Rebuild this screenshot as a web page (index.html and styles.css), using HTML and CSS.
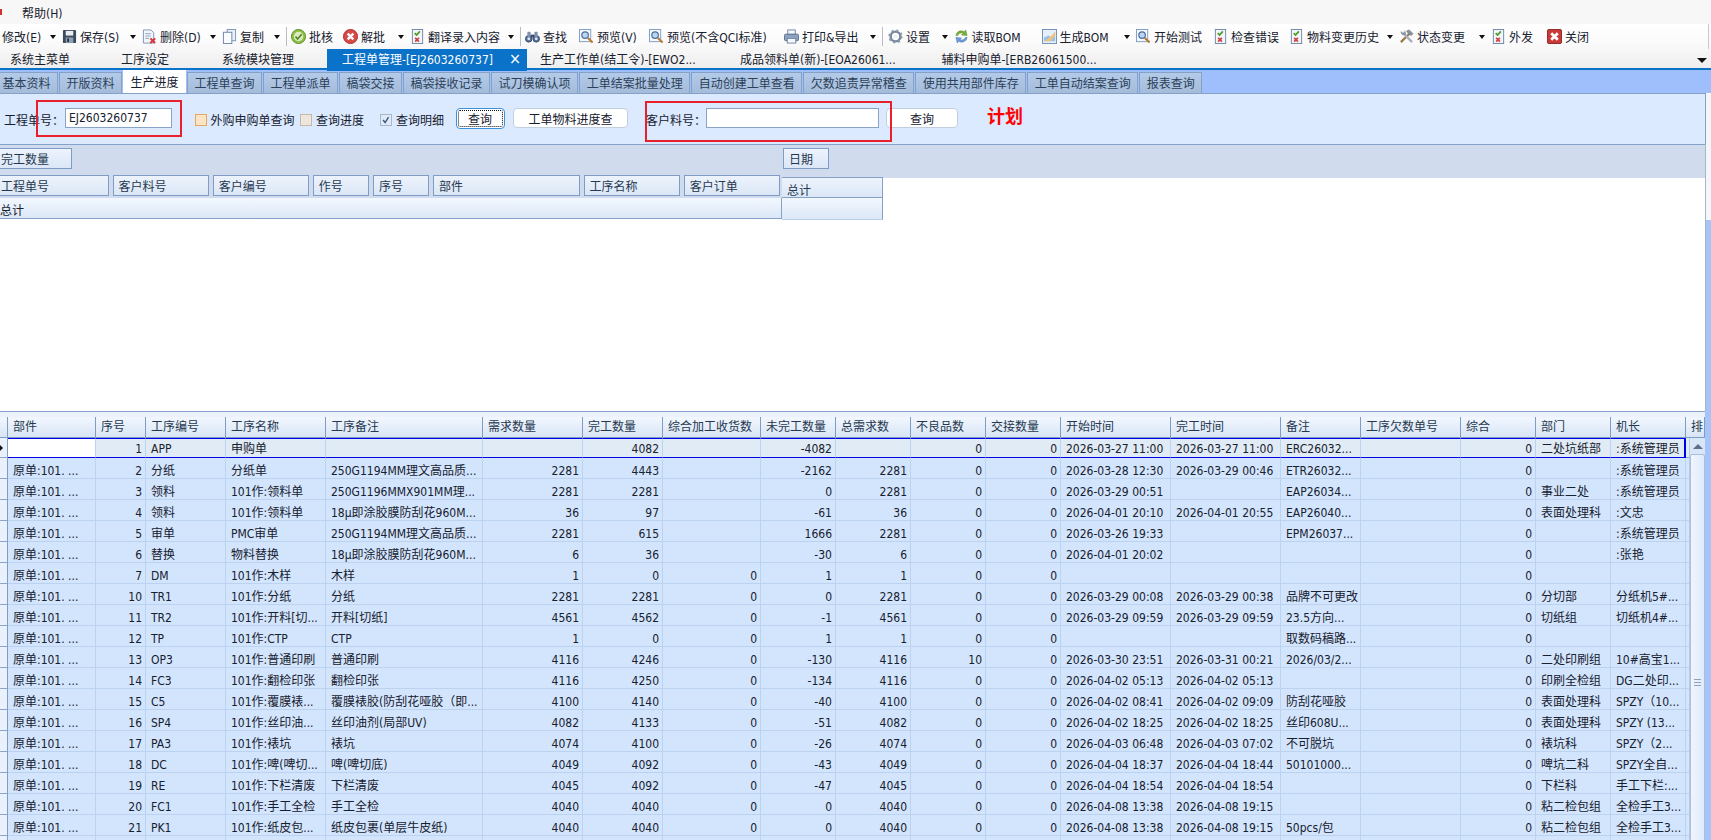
FILE: index.html
```html
<!DOCTYPE html>
<html lang="zh-CN">
<head>
  <meta charset="UTF-8" />
  <title>工程单管理</title>
  <link rel="stylesheet" href="styles.css">
</head>
<body>

<svg class="defs" width="0" height="0">
  <symbol id="i-save" viewBox="0 0 16 16"><rect x="1" y="1" width="14" height="14" rx="1" fill="#3d4a5c"/><rect x="4" y="2" width="8" height="5" fill="#e8edf3"/><rect x="4" y="9" width="8" height="6" fill="#8fa0b4"/><rect x="5.500" y="10" width="2" height="4" fill="#2b3644"/></symbol>
  <symbol id="i-del" viewBox="0 0 16 16"><path d="M1.500 1h8l3 3v11h-11z" fill="#f2f6fb" stroke="#7d94b4"/><path d="M3.500 5h6M3.500 7.500h6M3.500 10h4" stroke="#8aa0bd"/><path d="M9 10l5 5M14 10l-5 5" stroke="#d8363a" stroke-width="2.200"/></symbol>
  <symbol id="i-copy" viewBox="0 0 16 16"><rect x="5.500" y="0.500" width="9" height="12" fill="#eaf0f8" stroke="#7d94b4"/><rect x="1.500" y="3.500" width="9" height="12" fill="#f8fbff" stroke="#6d86a8"/></symbol>
  <symbol id="i-ok" viewBox="0 0 16 16"><circle cx="8" cy="8" r="7.500" fill="#8fbf45" stroke="#5c8a26"/><circle cx="8" cy="8" r="5" fill="#dbe9c4"/><path d="M4.800 8l2.300 2.600 4.300-5" fill="none" stroke="#4f8a1e" stroke-width="1.800"/></symbol>
  <symbol id="i-no" viewBox="0 0 16 16"><circle cx="8" cy="8" r="7.500" fill="#d84a48" stroke="#a92a2a"/><path d="M5 5l6 6M11 5l-6 6" stroke="#fff" stroke-width="2.600"/></symbol>
  <symbol id="i-check" viewBox="0 0 16 16"><rect x="2.500" y="0.500" width="11" height="15" fill="#f2f6fb" stroke="#6d86a8"/><path d="M5 4.500l2 2 3.500-4" fill="none" stroke="#4f9a22" stroke-width="1.800"/><path d="M5.500 9.500l4 4M9.500 9.500l-4 4" stroke="#cf4040" stroke-width="1.800"/></symbol>
  <symbol id="i-find" viewBox="0 0 16 16"><circle cx="4" cy="10.500" r="3.500" fill="#55719a" stroke="#3a4d6a"/><circle cx="12" cy="10.500" r="3.500" fill="#55719a" stroke="#3a4d6a"/><rect x="2.500" y="3" width="3.500" height="6" rx="1" fill="#7d91ad"/><rect x="10" y="3" width="3.500" height="6" rx="1" fill="#7d91ad"/><rect x="6" y="6" width="4" height="3" fill="#3a4d6a"/><circle cx="4" cy="10.500" r="1.500" fill="#dfe8f4"/><circle cx="12" cy="10.500" r="1.500" fill="#dfe8f4"/></symbol>
  <symbol id="i-zoom" viewBox="0 0 16 16"><rect x="0.500" y="0.500" width="12" height="13" fill="#f4f8fd" stroke="#7d9cc4"/><circle cx="6.500" cy="6.500" r="3.500" fill="#bcd6f2" stroke="#4d6f9c" stroke-width="1.300"/><path d="M9.500 9.500l5 5" stroke="#b77a30" stroke-width="2.200"/></symbol>
  <symbol id="i-print" viewBox="0 0 16 16"><rect x="4" y="1" width="8" height="5" fill="#f5f8fc" stroke="#6f86a6"/><rect x="0.500" y="5.500" width="15" height="7" rx="1.500" fill="#8da3c0" stroke="#566d8c"/><rect x="3.500" y="10" width="9" height="5" fill="#f5f8fc" stroke="#6f86a6"/></symbol>
  <symbol id="i-gear" viewBox="0 0 16 16"><circle cx="8" cy="8" r="5.200" fill="none" stroke="#77879b" stroke-width="2.600"/><circle cx="8" cy="8" r="6.400" fill="none" stroke="#8b99ab" stroke-width="2.400" stroke-dasharray="2.200 2.830"/><circle cx="8" cy="8" r="2.200" fill="#eef1f5"/></symbol>
  <symbol id="i-sync" viewBox="0 0 16 16"><path d="M2 7c.500-4 5-6.500 9-4l1.500-2 1.500 6-6-.500 1.800-1.800C7 3.500 4.500 5 4 7z" fill="#79b13c" stroke="#538a20" stroke-width=".5"/><path d="M14 9c-.500 4-5 6.500-9 4l-1.500 2L2 9l6 .500-1.800 1.800C9 12.500 11.500 11 12 9z" fill="#6d9ed8" stroke="#406fa8" stroke-width=".5"/></symbol>
  <symbol id="i-chart" viewBox="0 0 16 16"><rect x="0.500" y="0.500" width="15" height="15" fill="#e6f0fb" stroke="#6f8fb8"/><path d="M2 13V9l5-2 3 2 4-6v10z" fill="#9cc0e6"/><path d="M2 13l5-3 7-7v4l-5 6z" fill="#f1c27a"/></symbol>
  <symbol id="i-tools" viewBox="0 0 16 16"><path d="M2 14L11 5" stroke="#9b7a44" stroke-width="2.400"/><path d="M8 2l3-1 4 4-2 2-3-2z" fill="#8792a2" stroke="#5d6877" stroke-width=".5"/><path d="M14 14L6 6" stroke="#a7b0bc" stroke-width="2.400"/><path d="M6.500 6.500A3.500 3.500 0 0 1 2 2l2 2 1.500-.500L6 2 4 1a3.500 3.500 0 0 1 3 5z" fill="#8792a2"/></symbol>
  <symbol id="i-close" viewBox="0 0 16 16"><rect x="0.500" y="0.500" width="15" height="15" rx="1.500" fill="#c83a36" stroke="#8e2320"/><path d="M4.500 4.500l7 7M11.500 4.500l-7 7" stroke="#fff" stroke-width="3"/></symbol>
</svg>

<div class="menubar"><i class="menu-stub"></i><span class="menu-item">帮助(H)</span></div>

<div class="chrome">
  <div class="toolbar">
    <div class="tool"><span>修改(E)</span><i class="caret"></i></div>
    <div class="tool"><svg><use href="#i-save"/></svg><span>保存(S)</span><i class="caret"></i></div>
    <div class="tool"><svg><use href="#i-del"/></svg><span>删除(D)</span><i class="caret"></i></div>
    <div class="tool"><svg><use href="#i-copy"/></svg><span>复制</span><i class="caret"></i></div>
    <div class="sep"></div>
    <div class="tool"><svg><use href="#i-ok"/></svg><span>批核</span></div>
    <div class="tool"><svg><use href="#i-no"/></svg><span>解批</span><i class="caret"></i></div>
    <div class="tool"><svg><use href="#i-check"/></svg><span>翻译录入内容</span><i class="caret"></i></div>
    <div class="sep"></div>
    <div class="tool"><svg><use href="#i-find"/></svg><span>查找</span></div>
    <div class="tool"><svg><use href="#i-zoom"/></svg><span>预览(V)</span></div>
    <div class="tool"><svg><use href="#i-zoom"/></svg><span>预览(不含QCI标准)</span></div>
    <div class="tool"><svg><use href="#i-print"/></svg><span>打印&amp;导出</span><i class="caret"></i></div>
    <div class="sep"></div>
    <div class="tool"><svg><use href="#i-gear"/></svg><span>设置</span><i class="caret"></i></div>
    <div class="tool"><svg><use href="#i-sync"/></svg><span>读取BOM</span></div>
    <div class="tool"><svg><use href="#i-chart"/></svg><span>生成BOM</span><i class="caret"></i></div>
    <div class="tool"><svg><use href="#i-zoom"/></svg><span>开始测试</span></div>
    <div class="tool"><svg><use href="#i-check"/></svg><span>检查错误</span></div>
    <div class="tool"><svg><use href="#i-check"/></svg><span>物料变更历史</span><i class="caret"></i></div>
    <div class="tool"><svg><use href="#i-tools"/></svg><span>状态变更</span><i class="caret"></i></div>
    <div class="tool"><svg><use href="#i-check"/></svg><span>外发</span></div>
    <div class="tool"><svg><use href="#i-close"/></svg><span>关闭</span></div>
  </div>

  <div class="doc-tabs">
    <div class="doc-tab">系统主菜单</div>
    <div class="doc-tab">工序设定</div>
    <div class="doc-tab">系统模块管理</div>
    <div class="doc-tab doc-active"><span>工程单管理-[EJ2603260737]</span><b class="doc-x">×</b></div>
    <div class="doc-tab">生产工作单(结工令)-[EWO2...</div>
    <div class="doc-tab">成品领料单(新)-[EOA26061...</div>
    <div class="doc-tab">辅料申购单-[ERB26061500...</div>
    <div class="doc-more"><i class="caret"></i></div>
  </div>
</div>

<div class="work">
  <div class="sub-tabs">
    <div class="sub-tab">基本资料</div>
    <div class="sub-tab">开版资料</div>
    <div class="sub-tab sub-active">生产进度</div>
    <div class="sub-tab">工程单查询</div>
    <div class="sub-tab">工程单派单</div>
    <div class="sub-tab">稿袋交接</div>
    <div class="sub-tab">稿袋接收记录</div>
    <div class="sub-tab">试刀模确认项</div>
    <div class="sub-tab">工单结案批量处理</div>
    <div class="sub-tab">自动创建工单查看</div>
    <div class="sub-tab">欠数追责异常稽查</div>
    <div class="sub-tab">使用共用部件库存</div>
    <div class="sub-tab">工单自动结案查询</div>
    <div class="sub-tab">报表查询</div>
  </div>

  <div class="query">
    <label class="q-label">工程单号：</label>
    <input class="q-input q-job" type="text" value="EJ2603260737">
    <div class="check check-a"><i class="box box-orange"></i>外购申购单查询</div>
    <div class="check check-b"><i class="box box-tan"></i>查询进度</div>
    <div class="check check-c"><i class="box box-on"><svg viewBox="0 0 12 12"><path d="M2.500 6l2.500 3 4-6.500" fill="none" stroke="#3c5478" stroke-width="1.600"/></svg></i>查询明细</div>
    <button class="q-btn btn-focus">查询</button>
    <button class="q-btn btn-mat">工单物料进度查</button>
    <label class="q-label label-cust">客户料号：</label>
    <input class="q-input q-cust" type="text">
    <button class="q-btn btn-cust">查询</button>
    <div class="plan">计划</div>
    <div class="mark mark-job"></div>
    <div class="mark mark-cust"></div>
  </div>

  <div class="pivot">
    <div class="pivot-top">
      <div class="field f-done">完工数量</div>
      <div class="field f-date">日期</div>
    </div>
    <div class="pivot-body">
      <div class="pivot-left">
        <div class="pivot-fields">
          <div class="field f-w1">工程单号</div>
          <div class="field f-w2">客户料号</div>
          <div class="field f-w2">客户编号</div>
          <div class="field f-w3">作号</div>
          <div class="field f-w3">序号</div>
          <div class="field f-w4">部件</div>
          <div class="field f-w2">工序名称</div>
          <div class="field f-w2">客户订单</div>
        </div>
        <div class="pivot-total">总计</div>
      </div>
      <div class="pivot-right">
        <div class="pivot-head">总计</div>
        <div class="pivot-cell"></div>
      </div>
    </div>
  </div>

  <div class="grid">
    <table class="rows">
      <colgroup>
        <col class="w8"><col class="w88"><col class="w50"><col class="w80"><col class="w100"><col class="w157"><col class="w100"><col class="w80"><col class="w98"><col class="w75"><col class="w75"><col class="w75"><col class="w75"><col class="w110"><col class="w110"><col class="w80"><col class="w100"><col class="w75"><col class="w75"><col class="w75"><col class="w19">
      </colgroup>
      <thead>
        <tr><th></th><th>部件</th><th>序号</th><th>工序编号</th><th>工序名称</th><th>工序备注</th><th>需求数量</th><th>完工数量</th><th>综合加工收货数</th><th>未完工数量</th><th>总需求数</th><th>不良品数</th><th>交接数量</th><th>开始时间</th><th>完工时间</th><th>备注</th><th>工序欠数单号</th><th>综合</th><th>部门</th><th>机长</th><th>排</th></tr>
      </thead>
      <tbody>
        <tr class="selected"><td><i class="row-arrow"></i></td><td></td><td>1</td><td>APP</td><td>申购单</td><td></td><td></td><td>4082</td><td></td><td>-4082</td><td></td><td>0</td><td>0</td><td>2026-03-27 11:00</td><td>2026-03-27 11:00</td><td>ERC26032...</td><td></td><td>0</td><td>二处坑纸部</td><td>:系统管理员</td><td></td></tr>
        <tr><td></td><td>原单:101. ...</td><td>2</td><td>分纸</td><td>分纸单</td><td>250G1194MM理文高品质...</td><td>2281</td><td>4443</td><td></td><td>-2162</td><td>2281</td><td>0</td><td>0</td><td>2026-03-28 12:30</td><td>2026-03-29 00:46</td><td>ETR26032...</td><td></td><td>0</td><td></td><td>:系统管理员</td><td></td></tr>
        <tr><td></td><td>原单:101. ...</td><td>3</td><td>领料</td><td>101作:领料单</td><td>250G1196MMX901MM理...</td><td>2281</td><td>2281</td><td></td><td>0</td><td>2281</td><td>0</td><td>0</td><td>2026-03-29 00:51</td><td></td><td>EAP26034...</td><td></td><td>0</td><td>事业二处</td><td>:系统管理员</td><td></td></tr>
        <tr><td></td><td>原单:101. ...</td><td>4</td><td>领料</td><td>101作:领料单</td><td>18μ即涂胶膜防刮花960M...</td><td>36</td><td>97</td><td></td><td>-61</td><td>36</td><td>0</td><td>0</td><td>2026-04-01 20:10</td><td>2026-04-01 20:55</td><td>EAP26040...</td><td></td><td>0</td><td>表面处理科</td><td>:文忠</td><td></td></tr>
        <tr><td></td><td>原单:101. ...</td><td>5</td><td>审单</td><td>PMC审单</td><td>250G1194MM理文高品质...</td><td>2281</td><td>615</td><td></td><td>1666</td><td>2281</td><td>0</td><td>0</td><td>2026-03-26 19:33</td><td></td><td>EPM26037...</td><td></td><td>0</td><td></td><td>:系统管理员</td><td></td></tr>
        <tr><td></td><td>原单:101. ...</td><td>6</td><td>替换</td><td>物料替换</td><td>18μ即涂胶膜防刮花960M...</td><td>6</td><td>36</td><td></td><td>-30</td><td>6</td><td>0</td><td>0</td><td>2026-04-01 20:02</td><td></td><td></td><td></td><td>0</td><td></td><td>:张艳</td><td></td></tr>
        <tr><td></td><td>原单:101. ...</td><td>7</td><td>DM</td><td>101作:木样</td><td>木样</td><td>1</td><td>0</td><td>0</td><td>1</td><td>1</td><td>0</td><td>0</td><td></td><td></td><td></td><td></td><td>0</td><td></td><td></td><td></td></tr>
        <tr><td></td><td>原单:101. ...</td><td>10</td><td>TR1</td><td>101作:分纸</td><td>分纸</td><td>2281</td><td>2281</td><td>0</td><td>0</td><td>2281</td><td>0</td><td>0</td><td>2026-03-29 00:08</td><td>2026-03-29 00:38</td><td>品牌不可更改</td><td></td><td>0</td><td>分切部</td><td>分纸机5#...</td><td></td></tr>
        <tr><td></td><td>原单:101. ...</td><td>11</td><td>TR2</td><td>101作:开料[切...</td><td>开料[切纸]</td><td>4561</td><td>4562</td><td>0</td><td>-1</td><td>4561</td><td>0</td><td>0</td><td>2026-03-29 09:59</td><td>2026-03-29 09:59</td><td>23.5方向...</td><td></td><td>0</td><td>切纸组</td><td>切纸机4#...</td><td></td></tr>
        <tr><td></td><td>原单:101. ...</td><td>12</td><td>TP</td><td>101作:CTP</td><td>CTP</td><td>1</td><td>0</td><td>0</td><td>1</td><td>1</td><td>0</td><td>0</td><td></td><td></td><td>取数码稿路...</td><td></td><td>0</td><td></td><td></td><td></td></tr>
        <tr><td></td><td>原单:101. ...</td><td>13</td><td>OP3</td><td>101作:普通印刷</td><td>普通印刷</td><td>4116</td><td>4246</td><td>0</td><td>-130</td><td>4116</td><td>10</td><td>0</td><td>2026-03-30 23:51</td><td>2026-03-31 00:21</td><td>2026/03/2...</td><td></td><td>0</td><td>二处印刷组</td><td>10#高宝1...</td><td></td></tr>
        <tr><td></td><td>原单:101. ...</td><td>14</td><td>FC3</td><td>101作:翻检印张</td><td>翻检印张</td><td>4116</td><td>4250</td><td>0</td><td>-134</td><td>4116</td><td>0</td><td>0</td><td>2026-04-02 05:13</td><td>2026-04-02 05:13</td><td></td><td></td><td>0</td><td>印刷全检组</td><td>DG二处印...</td><td></td></tr>
        <tr><td></td><td>原单:101. ...</td><td>15</td><td>C5</td><td>101作:覆膜裱...</td><td>覆膜裱胶(防刮花哑胶（即...</td><td>4100</td><td>4140</td><td>0</td><td>-40</td><td>4100</td><td>0</td><td>0</td><td>2026-04-02 08:41</td><td>2026-04-02 09:09</td><td>防刮花哑胶</td><td></td><td>0</td><td>表面处理科</td><td>SPZY（10...</td><td></td></tr>
        <tr><td></td><td>原单:101. ...</td><td>16</td><td>SP4</td><td>101作:丝印油...</td><td>丝印油剂(局部UV)</td><td>4082</td><td>4133</td><td>0</td><td>-51</td><td>4082</td><td>0</td><td>0</td><td>2026-04-02 18:25</td><td>2026-04-02 18:25</td><td>丝印608U...</td><td></td><td>0</td><td>表面处理科</td><td>SPZY (13...</td><td></td></tr>
        <tr><td></td><td>原单:101. ...</td><td>17</td><td>PA3</td><td>101作:裱坑</td><td>裱坑</td><td>4074</td><td>4100</td><td>0</td><td>-26</td><td>4074</td><td>0</td><td>0</td><td>2026-04-03 06:48</td><td>2026-04-03 07:02</td><td>不可脱坑</td><td></td><td>0</td><td>裱坑科</td><td>SPZY（2...</td><td></td></tr>
        <tr><td></td><td>原单:101. ...</td><td>18</td><td>DC</td><td>101作:啤(啤切...</td><td>啤(啤切底)</td><td>4049</td><td>4092</td><td>0</td><td>-43</td><td>4049</td><td>0</td><td>0</td><td>2026-04-04 18:37</td><td>2026-04-04 18:44</td><td>50101000...</td><td></td><td>0</td><td>啤坑二科</td><td>SPZY全自...</td><td></td></tr>
        <tr><td></td><td>原单:101. ...</td><td>19</td><td>RE</td><td>101作:下栏清废</td><td>下栏清废</td><td>4045</td><td>4092</td><td>0</td><td>-47</td><td>4045</td><td>0</td><td>0</td><td>2026-04-04 18:54</td><td>2026-04-04 18:54</td><td></td><td></td><td>0</td><td>下栏科</td><td>手工下栏:...</td><td></td></tr>
        <tr><td></td><td>原单:101. ...</td><td>20</td><td>FC1</td><td>101作:手工全检</td><td>手工全检</td><td>4040</td><td>4040</td><td>0</td><td>0</td><td>4040</td><td>0</td><td>0</td><td>2026-04-08 13:38</td><td>2026-04-08 19:15</td><td></td><td></td><td>0</td><td>粘二检包组</td><td>全检手工3...</td><td></td></tr>
        <tr><td></td><td>原单:101. ...</td><td>21</td><td>PK1</td><td>101作:纸皮包...</td><td>纸皮包裹(单层牛皮纸)</td><td>4040</td><td>4040</td><td>0</td><td>0</td><td>4040</td><td>0</td><td>0</td><td>2026-04-08 13:38</td><td>2026-04-08 19:15</td><td>50pcs/包</td><td></td><td>0</td><td>粘二检包组</td><td>全检手工3...</td><td></td></tr>
        <tr><td></td><td></td><td></td><td></td><td></td><td></td><td></td><td></td><td></td><td></td><td></td><td></td><td></td><td></td><td></td><td></td><td></td><td></td><td></td><td></td><td></td></tr>
      </tbody>
    </table>
    <div class="scrollbar">
      <i class="scroll-up"></i>
      <div class="scroll-thumb"><i class="scroll-grip"></i></div>
    </div>
  </div>
</div>

</body>
</html>
```

FILE: styles.css
```css
* { box-sizing: border-box; margin: 0; padding: 0; }
html, body { height: 100%; overflow: hidden; }
body {
  font-family: "DejaVu Sans Condensed", "Noto Sans CJK SC", sans-serif;
  font-size: 12px;
  color: #16202e;
  background: #f7f7f7;
}
i { display: block; font-style: normal; }
.defs { position: absolute; }

/* menu and toolbar */
.menubar {
  display: flex;
  align-items: center;
  height: 24px;
  background: #f7f7f7;
}
.menu-stub {
  width: 2px;
  height: 6px;
  margin-right: 20px;
  background: #c8372f;
}

.chrome {
  height: 46px;
  background: linear-gradient(#ffffff 0, #fbfbfb 40%, #eeeeee 100%);
  border-bottom: 2px solid #0a72c8;
}

.toolbar {
  display: grid;
  grid-template-columns: 60px 80px 80px 64px 5px 52px 67px 110px 5px 54px 70px 135px 98px 6px 65.5px 88px 94.5px 77px 76px 110px 92px 56px auto;
  width: 1709px;
  height: 25px;
  padding-left: 2px;
  align-items: center;
  border-right: 1px solid #c9c9c9;
}
.tool {
  display: flex;
  align-items: center;
  gap: 3px;
  white-space: nowrap;
}
.tool svg { width: 15px; height: 15px; flex: none; }
.caret {
  width: 0;
  height: 0;
  margin-left: auto;
  margin-right: 6px;
  border: 3.5px solid transparent;
  border-top: 4px solid #111;
  border-bottom: 0;
}
.sep { width: 1px; height: 19px; background: #b9bdc3; }

.doc-tabs {
  display: grid;
  grid-template-columns: 111px 101px 120px 200px 198px 201.5px 200px 1fr;
  height: 19px;
  margin-left: -5px;
  line-height: 22px;
}
.doc-tab { padding-left: 15px; white-space: nowrap; }
.doc-active {
  display: flex;
  justify-content: space-between;
  padding-right: 6px;
  background: #0a72c8;
  color: #fff;
}
.doc-active + .doc-tab { margin-left: -2px; }
.doc-x { font-size: 16px; font-weight: normal; line-height: 20px; }
.doc-more { display: flex; align-items: center; justify-content: flex-end; padding-right: 2px; }
.doc-more .caret { border-width: 5px 5px 0; border-top-color: #111; margin-right: 2px; }

/* work area */
.work {
  height: 770px;
  background: linear-gradient(#f3f6fb 0, #f3f6fb 150px, #a6c4f8 150px);
}

.sub-tabs {
  display: flex;
  align-items: flex-end;
  height: 23px;
  background: #9fbffc;
}
.sub-tab {
  height: 21px;
  padding: 0 6.5px;
  margin-right: 1px;
  border: 1px solid #86a1c8;
  border-bottom: 0;
  line-height: 23px;
  white-space: nowrap;
  color: #2c4058;
  background: linear-gradient(#b3cbe8, #a4bcda);
}
.sub-tab:first-child { margin-left: -5px; }
.sub-active {
  height: 23px;
  line-height: 25px;
  color: #16202e;
  background: #fff;
  border-color: #fff;
}

.query {
  position: relative;
  display: flex;
  align-items: center;
  width: 1706px;
  height: 51px;
  padding: 0 0 2px 4px;
  background: #dbeafe;
  border-top: 1px solid #86a1c8;
  border-right: 1px solid #86a1c8;
}
.q-label { width: 61px; padding-top: 2px; white-space: nowrap; flex: none; }
.q-input {
  height: 20px;
  padding: 0 3px;
  border: 1px solid #8ba3c7;
  background: #fff;
  font: inherit;
  color: inherit;
  flex: none;
}
.q-job { width: 107px; }
.q-cust { width: 173px; }
.check { display: flex; align-items: center; gap: 4px; padding-top: 3px; white-space: nowrap; flex: none; }
.check-a { width: 105.5px; margin-left: 22.5px; }
.check-b { width: 80px; }
.check-c { width: 75.5px; }
.box { width: 12px; height: 12px; border: 1px solid; flex: none; }
.box-orange { background: #fde4c4; border-color: #e5a765; }
.box-tan { background: #ece6dc; border-color: #c6b8a6; }
.box-on { background: #e0e9f6; border-color: #a9b7cc; }
.box-on svg { display: block; width: 10px; height: 10px; }
.q-btn {
  height: 20px;
  border: 1px solid #c2cfdf;
  border-radius: 4px;
  background: #fff;
  font: inherit;
  color: inherit;
  flex: none;
}
.btn-focus {
  width: 49px;
  height: 21px;
  border-color: #3d8fe0;
  outline: 1px dotted #111;
  outline-offset: -3px;
}
.btn-mat { width: 115px; margin-left: 8.5px; }
.label-cust { margin-left: 18px; width: 60px; }
.btn-cust { width: 72px; margin-left: 7px; }
.plan {
  margin-left: 29px;
  padding-bottom: 2px;
  font-size: 18px;
  font-weight: bold;
  line-height: 20px;
  color: #f00;
}
.mark { position: absolute; border: 2px solid #e8202c; }
.mark-job { left: 36px; top: 6px; width: 146px; height: 37px; }
.mark-cust { left: 645px; top: 7px; width: 247px; height: 41px; }

/* pivot */
.pivot {
  width: 1706px;
  height: 267px;
  background: #fff;
  border-right: 1px solid #a9b4c4;
}
.pivot-top {
  display: flex;
  height: 34px;
  padding-top: 3px;
  background: #d0dced;
  border-top: 1px solid #86a1c8;
}
.field {
  height: 21px;
  padding-left: 1px;
  line-height: 22px;
  border: 1px solid #7f9cc4;
  background: linear-gradient(#edf3fc, #dbe7f7);
  color: #26384f;
  white-space: nowrap;
  flex: none;
}
.f-done { width: 73px; margin-left: -1px; }
.f-date { width: 46px; margin-left: 711px; padding-left: 5px; }
.pivot-body { display: flex; }
.pivot-left { width: 782px; margin-top: -3px; flex: none; }
.pivot-fields {
  display: flex;
  gap: 3.6px;
  height: 23px;
  background: #d0dced;
}
.f-w1 { width: 110px; margin-left: -1px; }
.f-w2 { width: 96.5px; padding-left: 5px; }
.f-w3 { width: 56.5px; padding-left: 5px; }
.f-w4 { width: 147px; padding-left: 5px; }
.pivot-total {
  height: 21px;
  line-height: 27px;
  overflow: hidden;
  background: linear-gradient(#f2f7fd, #dbe8f7);
  border-bottom: 1px solid #86a1c8;
  border-right: 1px solid #86a1c8;
}
.pivot-right { width: 101px; margin-top: -1px; flex: none; }
.pivot-head {
  height: 21px;
  padding: 3px 0 0 5px;
  background: linear-gradient(#edf3fc, #dbe7f7);
  border: 1px solid #86a1c8;
  border-left: 0;
  color: #26384f;
}
.pivot-cell {
  height: 22px;
  background: linear-gradient(#f2f7fd, #dbe8f7);
  border-right: 1px solid #86a1c8;
  border-bottom: 1px solid #bcd0ee;
}

/* detail grid */
.grid {
  position: relative;
  width: 1705px;
  height: 430px;
  padding-top: 5px;
  overflow: hidden;
  background: #edf2fa;
  border-top: 1px solid #86a1c8;
}
.rows { width: 1705px; table-layout: fixed; border-collapse: separate; border-spacing: 0; }
.w8 { width: 8px; } .w19 { width: 19px; } .w50 { width: 50px; } .w75 { width: 75px; }
.w80 { width: 80px; } .w88 { width: 88px; } .w98 { width: 98px; } .w100 { width: 100px; }
.w110 { width: 110px; } .w157 { width: 157px; }
.rows th, .rows td {
  height: 21px;
  padding: 0 3px 0 5px;
  overflow: hidden;
  white-space: nowrap;
  font-weight: normal;
  line-height: 13px;
  text-align: left;
}
.rows th {
  line-height: 15px;
  border-right: 1px solid #7f9cc4;
  border-bottom: 1px solid #7f9cc4;
  background: linear-gradient(#f2f7fe, #d8e5f6);
  color: #26384f;
}
.rows td {
  padding-top: 7px;
  border-right: 1px solid #bcd2f1;
  border-bottom: 1px solid #bcd2f1;
  background: #d3e5fd;
}
.rows td:nth-child(3),
.rows td:nth-child(n+7):nth-child(-n+13),
.rows td:nth-child(18) { text-align: right; }
.rows td:first-child {
  padding: 0;
  background: #e8f1fc;
  border-right-color: #7f9cc4;
  border-bottom-color: #8aa5c8;
}
.selected td {
  height: 20px;
  padding-top: 3px;
  background: #e1ebf5;
  border-top: 1px solid #0000e6;
  border-bottom: 1px solid #0000e6;
}
.selected td:nth-child(2) { background: #fff; }
.selected td:nth-child(20) { border-right: 2px solid #0000e6; }
.selected td:first-child, .selected td:last-child { border-top: 0; border-bottom-color: #8aa5c8; }
.row-arrow {
  width: 0;
  height: 0;
  border: 3px solid transparent;
  border-left: 3px solid #111;
  border-right: 0;
}

.scrollbar {
  position: absolute;
  top: 26px;
  right: 0;
  bottom: 0;
  width: 16px;
  padding-top: 6px;
  background: #d8e6f8;
  border-left: 1px solid #b7cbe6;
}
.scroll-up {
  width: 0;
  height: 0;
  margin: 0 auto;
  border: 5px solid transparent;
  border-bottom: 5px solid #5c6f8c;
  border-top: 0;
}
.scroll-thumb {
  height: 420px;
  margin-top: 5px;
  padding-top: 224px;
  background: linear-gradient(90deg, #f0f6fe, #dfeafa);
  border: 1px solid #a9bfdc;
  border-radius: 2px;
}
.scroll-grip {
  height: 7px;
  margin: 0 3px;
  border-top: 1px solid #8fa3bf;
  border-bottom: 1px solid #8fa3bf;
  background: linear-gradient(#0000 2px, #8fa3bf 2px, #8fa3bf 3px, #0000 3px);
}
```
